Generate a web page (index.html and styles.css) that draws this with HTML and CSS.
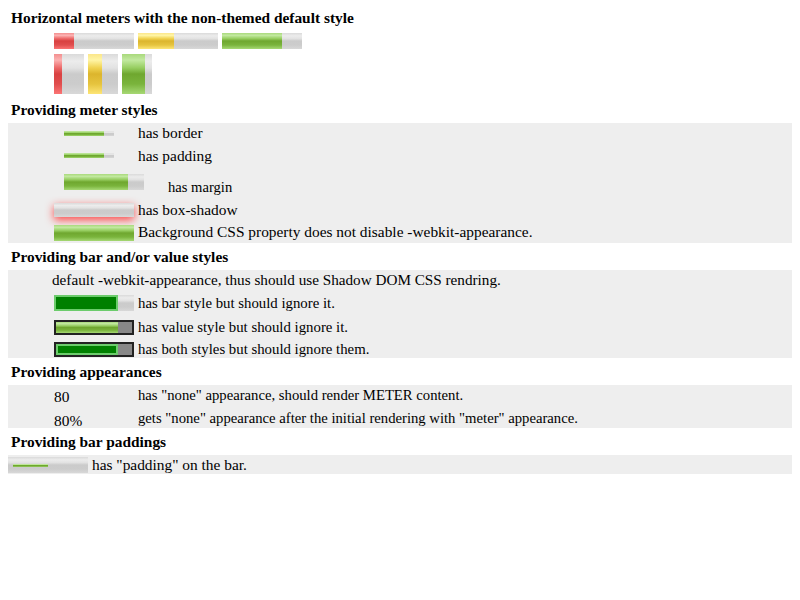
FILE: index.html
```html
<!DOCTYPE html>
<html>
<head>
<meta charset="utf-8">
<link rel="stylesheet" href="styles.css">
</head>
<body>
<div class="h first">Horizontal meters with the non-themed default style</div>
<div class="mrow1">
  <span class="meter hz"><span class="fill red" style="width:20px"></span></span>
  <span class="meter hz"><span class="fill yellow" style="width:36px"></span></span>
  <span class="meter hz"><span class="fill green" style="width:60px"></span></span>
</div>
<div class="mrow2">
  <span class="meter vt"><span class="fill red" style="width:8px"></span></span>
  <span class="meter vt"><span class="fill yellow" style="width:14px"></span></span>
  <span class="meter vt"><span class="fill green" style="width:23px"></span></span>
</div>

<div class="h">Providing meter styles</div>
<div class="block b1">
  <div class="r ra">
    <div class="cell"><span class="meter thin m-border"><span class="fill green" style="width:40px"></span></span></div>
    <span class="t">has border</span>
  </div>
  <div class="r rb">
    <div class="cell"><span class="meter thin m-padding"><span class="fill green" style="width:40px"></span></span></div>
    <span class="t">has padding</span>
  </div>
  <div class="r rc">
    <div class="cell cell-wide"><span class="meter hz m-margin"><span class="fill green" style="width:64px"></span></span></div>
    <span class="t">has margin</span>
  </div>
  <div class="r rd">
    <div class="cell"><span class="meter hz m-shadow"></span></div>
    <span class="t">has box-shadow</span>
  </div>
  <div class="r re">
    <div class="cell"><span class="meter hz"><span class="fill green" style="width:80px"></span></span></div>
    <span class="t">Background CSS property does not disable -webkit-appearance.</span>
  </div>
</div>

<div class="h">Providing bar and/or value styles</div>
<div class="block">
  <div class="r rf">
    <span class="t t-default">default -webkit-appearance, thus should use Shadow DOM CSS rendring.</span>
  </div>
  <div class="r rg rg1">
    <div class="cell"><span class="meter hz"><span class="barstyle" style="width:64px"></span></span></div>
    <span class="t">has bar style but should ignore it.</span>
  </div>
  <div class="r rg rg2">
    <div class="cell"><span class="meter dark"><span class="fill green" style="width:62px"></span></span></div>
    <span class="t">has value style but should ignore it.</span>
  </div>
  <div class="r rg rg3">
    <div class="cell"><span class="meter dark"><span class="barstyle" style="width:62px"></span></span></div>
    <span class="t">has both styles but should ignore them.</span>
  </div>
</div>

<div class="h">Providing appearances</div>
<div class="block">
  <div class="r rh rh1">
    <div class="cell num">80</div>
    <span class="t">has "none" appearance, should render METER content.</span>
  </div>
  <div class="r rh rh2">
    <div class="cell num">80%</div>
    <span class="t">gets "none" appearance after the initial rendering with "meter" appearance.</span>
  </div>
</div>

<div class="h">Providing bar paddings</div>
<div class="block">
  <div class="r ri">
    <div class="cell cell-pad"><span class="meter hz padbar"><span class="fill green thinfill" style="width:35px"></span></span></div>
    <span class="t">has "padding" on the bar.</span>
  </div>
</div>
</body>
</html>
```

FILE: styles.css
```css
html, body {
  background: #ffffff;
}
body {
  margin: 8px;
  font-family: "Liberation Serif", "Times New Roman", serif;
  font-size: 15.4px;
  color: #000000;
}
.h {
  font-weight: bold;
  height: 17px;
  padding-top: 1px;
  line-height: 18px;
  padding-left: 3px;
  margin-top: 4px;
  margin-bottom: 5px;
}
.h.first {
  margin-top: 0;
  margin-bottom: 0;
}
.mrow1 {
  display: flex;
  gap: 4px;
  padding-left: 46px;
  margin-top: 7px;
}
.mrow2 {
  display: flex;
  gap: 4px;
  padding-left: 46px;
  margin-top: 5px;
  margin-bottom: 6px;
}
.meter {
  display: block;
  position: relative;
  overflow: hidden;
  background: linear-gradient(to bottom, #dadada 0%, #ececec 18%, #e2e2e2 35%, #cbcbcb 50%, #cccccc 75%, #d8d8d8 100%);
}
.meter.hz {
  width: 80px;
  height: 16px;
}
.meter.vt {
  width: 30px;
  height: 40px;
}
.fill {
  display: block;
  height: 100%;
}
.fill.red {
  background: linear-gradient(to bottom, #f38f8f 0%, #fcb2b2 15%, #ec6868 35%, #d94141 50%, #e04e4e 75%, #fb7474 100%);
}
.fill.yellow {
  background: linear-gradient(to bottom, #fbe68a 0%, #fff5a6 15%, #f0d250 35%, #dcb52d 50%, #e6c43e 75%, #fde576 100%);
}
.fill.green {
  background: linear-gradient(to bottom, #a9d97c 0%, #c2e9a0 15%, #96cd60 35%, #6fa72f 50%, #7ab43c 75%, #a6d874 100%);
}
.block {
  background: #eeeeee;
}
.r {
  display: flex;
  align-items: flex-start;
  padding-left: 46px;
}
.cell {
  width: 80px;
  margin-right: 4px;
  flex: none;
}
.cell-wide {
  width: 110px;
}
.t {
  line-height: 18px;
  white-space: nowrap;
}
.b1 .t {
  margin-top: 1px;
}
.meter.thin {
  width: 50px;
  height: 5px;
  margin-left: 10px;
}
.ra { height: 23px; }
.ra .meter { margin-top: 8px; }
.rb { height: 23px; }
.rb .meter { margin-top: 7px; }
.rc { height: 31px; }
.rc .meter { margin-top: 5px; margin-left: 10px; }
.b1 .rc .t { margin-top: 9px; font-size: 14.6px; }
.rd { height: 22px; }
.rd .meter {
  margin-top: 3px;
  height: 14px;
  box-shadow: 0 3px 8px rgba(255, 30, 30, 0.8);
  overflow: visible;
}
.re { height: 21px; }
.re .meter { margin-top: 3px; }
.b1 .re .t { margin-top: 1px; }
.rf { height: 22px; padding-left: 44px; }
.rf .t { margin-top: 1px; font-size: 15.2px; }
.rg .t { font-size: 14.8px; margin-top: 2px; }
.rg1 { height: 24px; }
.rg1 .meter { margin-top: 3px; }
.rg2 { height: 22px; }
.rg2 .meter { margin-top: 4px; }
.rg3 { height: 20px; }
.rg3 .meter { margin-top: 4px; }
.barstyle {
  display: block;
  height: 100%;
  box-sizing: border-box;
  border: 2px solid #6ccc6c;
  background: #008000;
}
.meter.dark {
  width: 80px;
  height: 15px;
  box-sizing: border-box;
  border: 2px solid #222222;
  background: #888888;
}
.rh1 { height: 22px; }
.rh2 { height: 21px; }
.rh .t { font-size: 14.7px; }
.num {
  line-height: 18px;
}
.rh1 .t { margin-top: 1px; }
.rh1 .num { margin-top: 3px; }
.rh2 .t { margin-top: 2px; }
.rh2 .num { margin-top: 5px; }
.ri { height: 19px; padding-left: 0; }
.ri .t { margin-top: 1px; }
.cell-pad { width: 80px; }
.ri .meter { margin-top: 2px; padding: 7px 5px 6px; box-sizing: border-box; }
.thinfill { height: 3px; }
```
